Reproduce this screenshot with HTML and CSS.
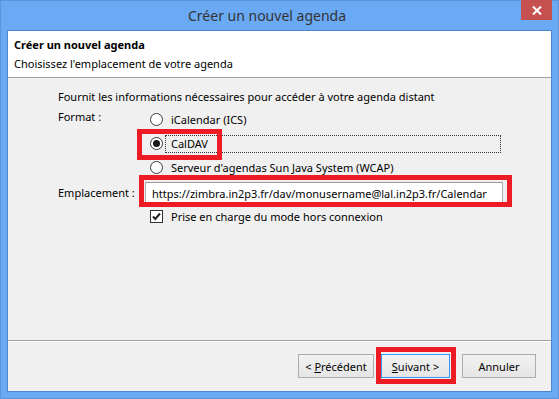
FILE: index.html
```html
<!DOCTYPE html>
<html lang="fr">
<head>
  <meta charset="utf-8" />
  <title>Créer un nouvel agenda</title>
  <meta name="viewport" content="width=device-width, initial-scale=1" />
<link rel="stylesheet" href="styles.css">
</head>

<body>
  <div class="frame">
    <div class="titlebar">
      <div class="title">Créer un nouvel agenda</div>
      <div class="close">
        <svg width="10" height="9" viewBox="0 0 10 9">
          <path d="M1 0.5 L9 8.5 M9 0.5 L1 8.5" stroke="#fff" stroke-width="2" />
        </svg>
      </div>
    </div>

    <div class="client">
      <div class="header">
        <div class="header-title">Créer un nouvel agenda</div>
        <div class="header-sub">Choisissez l'emplacement de votre agenda</div>
      </div>

      <div class="content">
        <p class="intro">Fournit les informations nécessaires pour accéder à votre agenda distant</p>
        <div class="form">
          <div class="label label-format">Format :</div>
          <div class="choices">
            <div class="radio-row">
              <span class="radio"></span>
              <span class="choice">iCalendar (ICS)</span>
            </div>
            <div class="radio-row">
              <span class="radio checked"></span>
              <span class="choice focused">CalDAV</span>
            </div>
            <div class="radio-row">
              <span class="radio"></span>
              <span class="choice">Serveur d'agendas Sun Java System (WCAP)</span>
            </div>
          </div>

          <div class="label">Emplacement :</div>
          <input class="location" type="text" value="https://zimbra.in2p3.fr/dav/monusername@lal.in2p3.fr/Calendar" readonly />

          <div></div>
          <div class="check-row">
            <span class="checkbox">
              <svg width="11" height="11" viewBox="0 0 11 11">
                <path d="M2 5.5 L4.3 8 L9 2.5" stroke="#222" stroke-width="2" fill="none" />
              </svg>
            </span>
            <span class="choice">Prise en charge du mode hors connexion</span>
          </div>
        </div>

        <!-- encadrés rouges d'annotation -->
        <div class="mark mark-caldav"></div>
        <div class="mark mark-location"></div>
      </div>

      <div class="footer">
        <button class="btn"><span class="btn-in">&lt; <u>P</u>récédent</span></button>
        <button class="btn btn-default"><span class="btn-in"><u>S</u>uivant &gt;</span></button>
        <button class="btn btn-cancel"><span class="btn-in">Annuler</span></button>
        <div class="mark mark-next"></div>
      </div>
    </div>
  </div>
</body>
</html>
```

FILE: styles.css
```css
* {
  box-sizing: border-box;
  margin: 0;
  padding: 0;
}

html,
body {
  width: 559px;
  height: 399px;
  overflow: hidden;
  font-family: "Noto Sans", "Open Sans", sans-serif;
  font-size: 11px;
  color: #000;
}

.frame {
  width: 559px;
  height: 399px;
  background-color: #6aa9f3;
  border: 1px solid #5b95dc;
  padding: 0 6px 6px 6px;
  display: flex;
  flex-direction: column;
}

.titlebar {
  height: 29px;
  display: flex;
  align-items: flex-start;
}

.title {
  flex: 1;
  text-align: center;
  font-size: 14px;
  line-height: 29px;
  color: #333;
  padding-left: 6px;
}

.close {
  width: 31px;
  height: 20px;
  margin-top: -1px;
  background-color: #c75050;
  display: flex;
  align-items: center;
  justify-content: center;
}

.client {
  flex: 1;
  border: 1px solid #4f87cc;
  background-color: #f0f0f0;
  display: flex;
  flex-direction: column;
}

.header {
  height: 47px;
  background-color: #fff;
  border-bottom: 1px solid #a0a0a0;
  padding: 4px 6px 0 6px;
  line-height: 19px;
}

.header-title {
  font-weight: bold;
}

.content {
  position: relative;
  flex: 1;
  border-bottom: 1px solid #a0a0a0;
  padding: 11px 0 0 50px;
}

.intro {
  line-height: 16px;
  margin-bottom: 5px;
}

.form {
  display: grid;
  grid-template-columns: 87px 358px;
  row-gap: 3px;
  line-height: 16px;
}

.choices {
  display: flex;
  flex-direction: column;
  row-gap: 5px;
}

.radio-row,
.check-row {
  display: flex;
  align-items: center;
  padding-left: 5px;
  height: 19px;
}

.radio {
  width: 13px;
  height: 13px;
  border: 1px solid #3c3c3c;
  border-radius: 50%;
  background-color: #fff;
  display: flex;
  align-items: center;
  justify-content: center;
}

.radio.checked::after {
  content: "";
  width: 7px;
  height: 7px;
  border-radius: 50%;
  background-color: #1a1a1a;
}

.choice {
  flex: 1;
  margin-left: 2px;
  margin-right: 2px;
  padding-left: 5px;
  border: 1px solid transparent;
  line-height: 16px;
}

.choice.focused {
  border: 1px dotted #333;
}

.label {
  align-self: center;
}

.label-format {
  align-self: start;
  margin-top: -1px;
}

.location {
  height: 22px;
  border: 1px solid #aaa;
  border-top-color: #999;
  background-color: #fff;
  font-family: inherit;
  font-size: 11px;
  padding: 0 6px;
  outline: none;
  margin: 2px 0;
}

.check-row {
  margin-top: -2px;
}

.checkbox {
  width: 13px;
  height: 13px;
  border: 1px solid #333;
  background-color: #fff;
  display: flex;
  align-items: center;
  justify-content: center;
}

.footer {
  position: relative;
  flex: 0 0 50px;
  border-top: 1px solid #fff;
  display: flex;
  justify-content: flex-end;
  align-items: flex-start;
  padding: 12px 15px 0 0;
}

.btn {
  width: 76px;
  height: 24px;
  border: 1px solid #acacac;
  background: linear-gradient(#f2f2f2, #e5e5e5);
  font-family: inherit;
  font-size: 11px;
  color: #000;
  display: flex;
  align-items: center;
  justify-content: center;
  margin-left: 7px;
}

.btn-default {
  width: 69px;
  border-color: #3399ff;
}

.btn-cancel {
  width: 74px;
  margin-left: 12px;
}

.mark {
  position: absolute;
  border: 5px solid #ed1c24;
}

.mark-caldav {
  left: 129px;
  top: 51px;
  width: 85px;
  height: 31px;
}

.mark-location {
  left: 131px;
  top: 97px;
  width: 373px;
  height: 32px;
}

.mark-next {
  left: 368px;
  top: 5px;
  width: 80px;
  height: 37px;
}
```
